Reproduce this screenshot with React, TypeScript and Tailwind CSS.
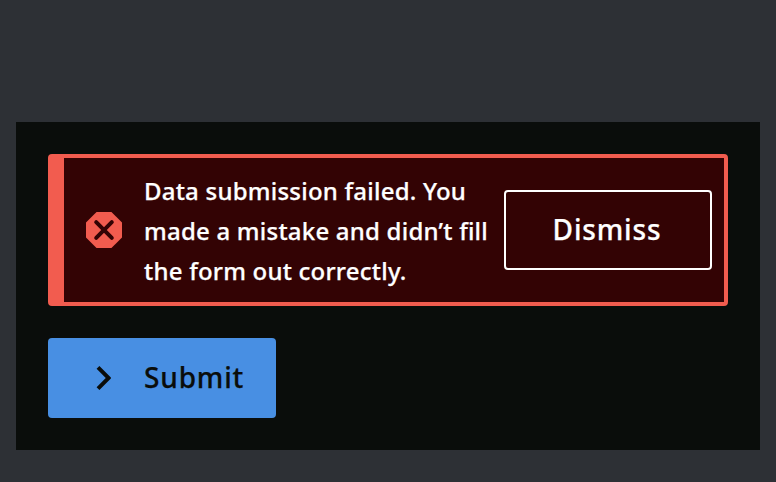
export default function App() {
  return (
    <div className="h-[482px] w-[776px] bg-[#2d3035] px-4 pt-[122px] font-['Noto_Sans',sans-serif]">
      <main className="h-[328px] bg-[#0a0d0b] p-8">
        <div
          role="alert"
          className="flex h-[152px] items-center rounded border-4 border-l-[16px] border-[#f25c4f] bg-[#330304] pl-4 pr-3 text-white"
        >
          <svg className="size-12 shrink-0" viewBox="0 0 24 24">
            <path fill="#f25c4f" d="M15.73 3H8.27L3 8.27v7.46L8.27 21h7.46L21 15.73V8.27z" />
            <path stroke="#330304" strokeWidth="2" strokeLinecap="round" d="M8.1 8.1l7.8 7.8M15.9 8.1l-7.8 7.8" />
          </svg>
          <p className="ml-4 w-[360px] shrink-0 pt-0.5 text-2xl/10 font-medium tracking-[0.22px] [-webkit-text-stroke:0.25px]">
            Data submission failed. You
            <br />
            made a mistake and didn’t fill
            <br />
            the form out correctly.
          </p>
          <button className="h-20 w-[208px] shrink-0 rounded border-2 border-white pb-0.5 pr-0.5 text-[28px] font-medium tracking-[0.84px] [-webkit-text-stroke:0.25px]">
            Dismiss
          </button>
        </div>
        <button className="mt-8 flex h-20 w-[228px] items-center rounded bg-[#488fe3] pl-8 text-[28px] font-medium tracking-[0.84px] text-[#0a0d0b] [-webkit-text-stroke:0.25px]">
          <svg className="size-12 shrink-0" viewBox="0 0 24 24" fill="currentColor">
            <path d="M9.7 6L8.3 7.41 12.88 12l-4.58 4.59L9.7 18l5.75-5.75v-.5z" />
          </svg>
          <span className="ml-4 pb-0.5">Submit</span>
        </button>
      </main>
    </div>
  );
}
